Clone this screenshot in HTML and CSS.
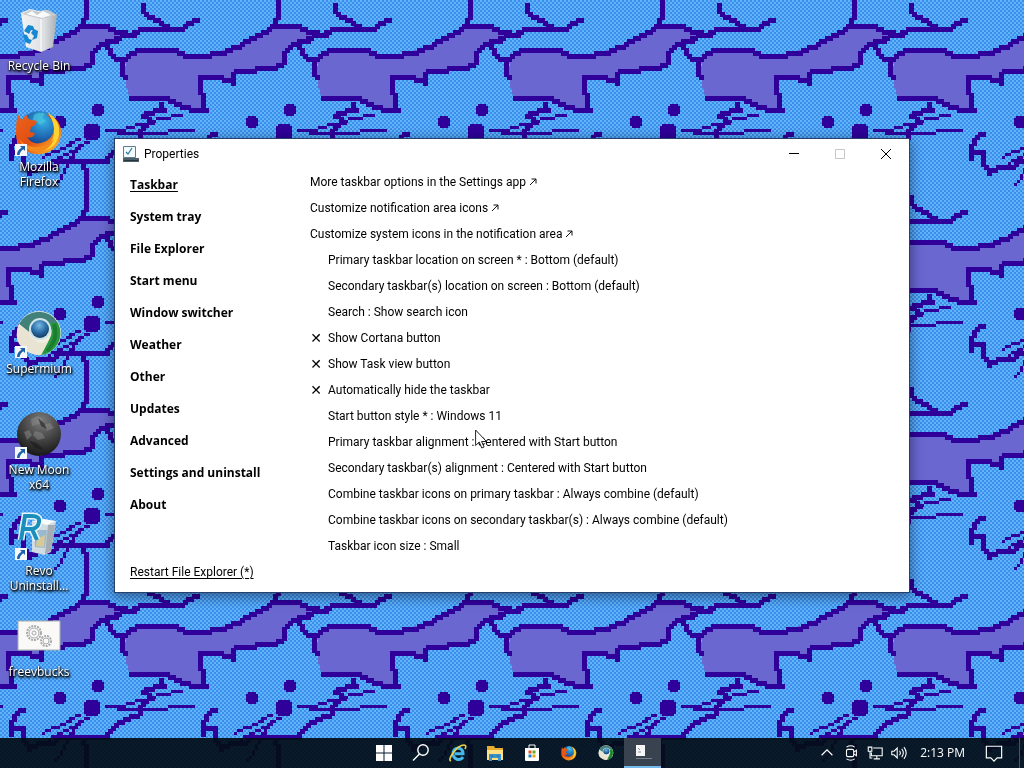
FILE: index.html
```html
<!DOCTYPE html>
<html lang="en">
<head>
<meta charset="utf-8">
<title>Properties</title>
<link rel="stylesheet" href="styles.css">
</head>
<body>
<canvas class="wallpaper" aria-hidden="true"></canvas>

<svg class="defs" aria-hidden="true">
  <defs>
    <linearGradient id="fxFire" x1="0" y1="0" x2="1" y2="1"><stop offset="0" stop-color="#e8641b"/><stop offset=".5" stop-color="#e34e12"/><stop offset="1" stop-color="#ffcb2e"/></linearGradient>
    <radialGradient id="fxGlobe" cx=".6" cy=".25" r=".8"><stop offset="0" stop-color="#35b4e8"/><stop offset=".6" stop-color="#1c5aa5"/><stop offset="1" stop-color="#122765"/></radialGradient>
    <radialGradient id="ball" cx=".45" cy=".3" r=".8"><stop offset="0" stop-color="#78b8e4"/><stop offset=".5" stop-color="#2a6da6"/><stop offset="1" stop-color="#0d2c4d"/></radialGradient>
    <radialGradient id="moon" cx=".55" cy=".2" r=".85"><stop offset="0" stop-color="#7b7b7b"/><stop offset=".5" stop-color="#454545"/><stop offset="1" stop-color="#111"/></radialGradient>
    <linearGradient id="bin" x1="0" x2="1"><stop offset="0" stop-color="#f3f4f4"/><stop offset=".65" stop-color="#dcdfe1"/><stop offset="1" stop-color="#a9aeb3"/></linearGradient>
  </defs>
  <symbol id="arrow" viewBox="0 0 12 12"><path d="M0 0h12v12H0z" fill="#f4f8fb"/><path d="M5 2h5v5L8.300 5.300C6.500 6.500 5 8 4.500 11H2C2 7.500 4 5 6.600 3.700z" fill="#1d5fa8"/></symbol>
  <symbol id="firefox" viewBox="0 0 48 48">
    <circle cx="24" cy="23" r="20" fill="url(#fxGlobe)"/>
    <path d="M19 7q6-4 11-1l-3 4 4 3-6 4-3-3-5 2z" fill="#4bc7dd" opacity=".65"/>
    <path d="M3 6q1 4 4 6 2-4 5-5 0 4 4 5 5 0 6 2-2 4-6 5l-1 5 5 1q-2 6-8 4 5 8 14 6 12-3 13-14 0-9-8-15 13 3 15 16 1 17-15 23-13 4-22-4Q0 36 1 23 1 13 3 6z" fill="url(#fxFire)"/>
    <path d="M33 5q13 7 11 22-3 14-17 16 10-6 12-17 1-12-6-21z" fill="#ffd331"/>
    <path d="M4 31q8 9 18 8 10 0 17-8-5 13-18 13Q9 43 4 31z" fill="#f58a1c"/>
  </symbol>
  <symbol id="supermium" viewBox="0 0 48 48">
    <circle cx="24" cy="23" r="22" fill="#f0eee0"/>
    <path d="M4 14A22 22 0 0 1 43 13H25q-9 0-11 9z" fill="#41817a"/>
    <path d="M43 13a22 22 0 0 1-17 32l9-17q4-8-2-15z" fill="#29983c"/>
    <path d="M39 14q5 15-7 27" fill="none" stroke="#1b7d32" stroke-width="4"/>
    <path d="M4 14q-7 18 7 26 7 5 15 5l8-15q-6 5-13 1-6-3-7-9z" fill="#e9e4d2"/>
    <circle cx="25" cy="19" r="11" fill="#cfe3e8"/><circle cx="25" cy="19" r="9" fill="url(#ball)"/>
  </symbol>
</svg>

<main class="desktop">
  <ul class="shortcuts">
    <li><a class="shortcut" href="#recycle">
      <svg class="pic" viewBox="0 0 48 48"><path d="M6 6l9-4 9 2 8-1 10 5-4 32-12 5-15-5z" fill="url(#bin)"/><path d="M7 7l19 5 16-4-9-5-9 2-9-2z" fill="#c5cacd"/><path d="M11 7l6-3 5 4 6-4 8 4-9 3z" fill="#fafafa"/><path d="M26 12v32" stroke="#fff" stroke-width="1"/><path d="M9 24l4-6 5 1 2 5-4-1-2 4zM19 22l4 2-1 7-5 2 2-4-3-3zM8 27l4 1 2 4 3 1-2 4-5-2z" fill="#1687d2"/></svg>
      <span>Recycle Bin</span></a></li>
    <li><a class="shortcut" href="#firefox">
      <svg class="pic" viewBox="0 0 48 48"><use href="#firefox"/><use href="#arrow" y="36" width="12" height="12"/></svg>
      <span>Mozilla Firefox</span></a></li>
    <li></li>
    <li><a class="shortcut" href="#supermium">
      <svg class="pic" viewBox="0 0 48 48"><use href="#supermium"/><use href="#arrow" y="36" width="12" height="12"/></svg>
      <span>Supermium</span></a></li>
    <li><a class="shortcut" href="#newmoon">
      <svg class="pic" viewBox="0 0 48 48"><circle cx="24" cy="23" r="22" fill="url(#moon)"/><path d="M16 8l7-3 5 3-4 5-7 2zM29 14l6-2 4 5-7 3zM20 20l7 2 3 5-7 2-5-5zM9 21l5-2 3 5-5 5z" fill="#929292" opacity=".45"/><path d="M23 7l6 5 3 6-6-3zM14 30l8 2 7 7-9-2z" fill="#181818" opacity=".55"/><use href="#arrow" y="36" width="12" height="12"/></svg>
      <span>New Moon x64</span></a></li>
    <li><a class="shortcut" href="#revo">
      <svg class="pic" viewBox="0 0 48 48"><path d="M17 9h24l-5 31-7 3-12-3z" fill="#d1dce2"/><path d="M17 9l12-2 12 2-9 4z" fill="#f9fbfc"/><path d="M33 13h7l-4 26-6 3z" fill="#a3adb3"/><path d="M19 18h13l-2 18-10-1z" fill="#7da6c3" opacity=".65"/><path d="M22 27l8-4-1 12-8-1z" fill="#d8ca96"/><path d="M6 28l4-24h7q8 0 7 6-1 6-7 7l5 11M9 17h8" fill="none" stroke="#e6f6fc" stroke-width="7"/><path d="M6 28l4-24h7q8 0 7 6-1 6-7 7l5 11M9 17h8" fill="none" stroke="#1c8ebb" stroke-width="4"/><use href="#arrow" y="36" width="12" height="12"/></svg>
      <span>Revo Uninstall...</span></a></li>
    <li><a class="shortcut" href="#freevbucks">
      <svg class="pic" viewBox="0 0 48 48"><path d="M3 8h42v29H3z" fill="#faf9f7" stroke="#a5adb0"/><g fill="none" stroke="#a8abad"><circle cx="19" cy="20" r="7" stroke-width="2" stroke-dasharray="2 1"/><circle cx="19" cy="20" r="5"/><circle cx="19" cy="20" r="2"/><circle cx="31" cy="28" r="5" stroke-width="2" stroke-dasharray="2 1"/><circle cx="31" cy="28" r="3"/></g></svg>
      <span>freevbucks</span></a></li>
  </ul>

  <section class="window" aria-label="Properties">
    <header class="titlebar">
      <svg class="app-icon" viewBox="0 0 16 16"><path d="M.5.500h12v11H.5z" fill="#f4fbfd" stroke="#5a7f92"/><path d="M3 6l2 2 4-6" fill="none" stroke="#247aa0" stroke-width="1.200"/><path d="M0 12h16v4H0z" fill="#4d5e68"/><path d="M1 14.500h14" stroke="#26343d"/></svg>
      <h1>Properties</h1>
      <button class="win-btn" aria-label="Minimize"><svg viewBox="0 0 12 12"><path d="M1 5.500h10" stroke="#000"/></svg></button>
      <button class="win-btn" aria-label="Maximize" disabled><svg viewBox="0 0 12 12"><path d="M1.500 1.500h9v9h-9z" fill="none" stroke="#c6c6c6"/></svg></button>
      <button class="win-btn" aria-label="Close"><svg viewBox="0 0 12 12"><path d="M1 1l10 10M11 1L1 11" fill="none" stroke="#000"/></svg></button>
    </header>
    <div class="panes">
      <nav class="sections">
        <a class="current" href="#taskbar">Taskbar</a>
        <a href="#tray">System tray</a>
        <a href="#explorer">File Explorer</a>
        <a href="#start">Start menu</a>
        <a href="#switcher">Window switcher</a>
        <a href="#weather">Weather</a>
        <a href="#other">Other</a>
        <a href="#updates">Updates</a>
        <a href="#advanced">Advanced</a>
        <a href="#settings">Settings and uninstall</a>
        <a href="#about">About</a>
        <a class="restart" href="#restart">Restart File Explorer (*)</a>
      </nav>
      <form class="options">
        <a class="row" href="#more">More taskbar options in the Settings app <svg class="out" viewBox="0 0 8 8"><path d="M1 7l6-6M2.500 1H7v4.500" fill="none" stroke="#111"/></svg></a>
        <a class="row" href="#notif">Customize notification area icons <svg class="out" viewBox="0 0 8 8"><path d="M1 7l6-6M2.500 1H7v4.500" fill="none" stroke="#111"/></svg></a>
        <a class="row" href="#sysicons">Customize system icons in the notification area <svg class="out" viewBox="0 0 8 8"><path d="M1 7l6-6M2.500 1H7v4.500" fill="none" stroke="#111"/></svg></a>
        <label class="row sub">Primary taskbar location on screen * : <select><option>Bottom (default)</option></select></label>
        <label class="row sub">Secondary taskbar(s) location on screen : <select><option>Bottom (default)</option></select></label>
        <label class="row sub">Search : <select><option>Show search icon</option></select></label>
        <label class="row"><input type="checkbox">Show Cortana button</label>
        <label class="row"><input type="checkbox">Show Task view button</label>
        <label class="row"><input type="checkbox">Automatically hide the taskbar</label>
        <label class="row sub">Start button style * : <select><option>Windows 11</option></select></label>
        <label class="row sub">Primary taskbar alignment : <select><option>Centered with Start button</option></select></label>
        <label class="row sub">Secondary taskbar(s) alignment : <select><option>Centered with Start button</option></select></label>
        <label class="row sub">Combine taskbar icons on primary taskbar : <select><option>Always combine (default)</option></select></label>
        <label class="row sub">Combine taskbar icons on secondary taskbar(s) : <select><option>Always combine (default)</option></select></label>
        <label class="row sub">Taskbar icon size : <select><option>Small</option></select></label>
      </form>
    </div>
  </section>
  <svg class="cursor" viewBox="0 0 12 20" aria-hidden="true"><path d="M.6 1v15.500l3.600-3.500 2.600 6 2.300-1-2.600-5.500h5z" fill="#fff" stroke="#222"/></svg>
</main>

<footer class="taskbar">
  <div class="apps">
    <button aria-label="Start"><svg viewBox="0 0 20 20"><path d="M2 2h7.500v7.500H2zM10.500 2H18v7.500h-7.500zM2 10.500h7.500V18H2zM10.500 10.500H18V18h-7.500z" fill="#fff"/></svg></button>
    <button aria-label="Search"><svg viewBox="0 0 20 20"><circle cx="12" cy="7" r="5.200" fill="none" stroke="#fff" stroke-width="1.400"/><path d="M8.500 11L2 17.500" stroke="#fff" stroke-width="1.500"/></svg></button>
    <button aria-label="Internet Explorer"><svg viewBox="0 0 20 20"><path d="M15 14q-2 3-5.500 2.500Q5 15 5 10.500 5.500 5.500 10 5q5 .500 5 5.800H7" fill="none" stroke="#43b9ec" stroke-width="3"/><path d="M3 18q-3-1 2-8 6-8 11-8 3 0 1 4" fill="none" stroke="#f0cf45" stroke-width="1.600"/></svg></button>
    <button aria-label="File Explorer"><svg viewBox="0 0 20 20"><path d="M2 3h7l1 2h8v12H2z" fill="#e9ad2d"/><path d="M2 7h16v10H2z" fill="#ffe082"/><path d="M4 11h12v7h-3v-3H7v3H4z" fill="#3993c8"/><path d="M6 13h2M12 13h2" stroke="#235e83"/></svg></button>
    <button aria-label="Store"><svg viewBox="0 0 20 20"><path d="M3 5h14v12q0 1-1 1H4q-1 0-1-1z" fill="#fff"/><path d="M7 5V2h6v3" fill="none" stroke="#fff"/><path d="M6.500 7.500h3v3h-3z" fill="#e25428"/><path d="M10.500 7.500h3v3h-3z" fill="#6ea723"/><path d="M6.500 11.500h3v3h-3z" fill="#1883c6"/><path d="M10.500 11.500h3v3h-3z" fill="#e2aa19"/></svg></button>
    <button aria-label="Firefox"><svg class="small" viewBox="0 0 48 48"><use href="#firefox"/></svg></button>
    <button aria-label="Supermium"><svg class="small" viewBox="0 0 48 48"><use href="#supermium"/></svg></button>
    <button class="active" aria-label="Properties"><svg viewBox="0 0 20 20"><path d="M3 3h9v11H3z" fill="#f6f6f6"/><path d="M5 6l2 2M5 10h3" stroke="#8292a0"/><path d="M3 16.500h16" stroke="#74818c"/></svg></button>
  </div>
  <div class="tray">
    <button aria-label="Show hidden icons"><svg viewBox="0 0 20 20"><path d="M4 12.500l6-6 6 6" fill="none" stroke="#fff" stroke-width="1.300"/></svg></button>
    <button aria-label="Meet now"><svg viewBox="0 0 20 20"><g fill="none" stroke="#fff" stroke-width="1.200"><rect x="5" y="6" width="8" height="8" rx="1.500"/><path d="M13 9l3-2v6l-3-2M5 3.500q5-3 9 0M5 16.500q5 3 9 0"/></g></svg></button>
    <button aria-label="Network"><svg viewBox="0 0 20 20"><g fill="none" stroke="#fff" stroke-width="1.200"><path d="M8 4.500h10v8.500H6V9.500M12 13v3.500M8.500 16.500h7M2.500 3.500h4v4.500h-4zM4.500 8v7.500H7"/></g></svg></button>
    <button aria-label="Volume"><svg viewBox="0 0 20 20"><g fill="none" stroke="#fff" stroke-width="1.200"><path d="M2 8h2.500L8 4.500v11L4.500 12H2zM10.500 7.500q2 2.500 0 5M13 5.500q3.600 4.500 0 9M15.500 3.500q5 6.500 0 13"/></g></svg></button>
    <time class="clock">2:13 PM</time>
    <button class="notify" aria-label="Notifications"><svg viewBox="0 0 20 20"><path d="M1.500 2.500h17v13h-5L10 19l-3.500-3.500h-5z" fill="none" stroke="#fff" stroke-width="1.300"/></svg></button>
    <button class="peek" aria-label="Show desktop"></button>
  </div>
</footer>
<script src="wallpaper.js"></script>
</body>
</html>
```
FILE: styles.css
```css
* { box-sizing: border-box; }
body {
  margin: 0;
  height: 100vh;
  display: flex;
  flex-direction: column;
  overflow: hidden;
  background: #499ff2;
  font: 12px/16px "Open Sans", "Noto Sans", sans-serif;
  color: #000;
}
a { color: inherit; text-decoration: none; }
button { border: 0; padding: 0; background: none; font: inherit; color: inherit; }
svg { display: block; }
.defs { position: absolute; width: 0; height: 0; }
.wallpaper { position: fixed; inset: 0; width: 100%; height: 100%; z-index: -1; }

.desktop { flex: 1; min-height: 0; position: relative; }
.shortcuts {
  list-style: none;
  margin: 0;
  padding: 7px 0 0 1px;
  width: 77px;
  display: grid;
  grid-auto-rows: 101px;
}
.shortcut {
  display: flex;
  flex-direction: column;
  align-items: center;
  gap: 3px;
  color: #fff;
  line-height: 15px;
  text-align: center;
  text-shadow: 1px 1px 2px #000, 0 1px 2px #000, 1px 2px 3px #000;
}
.shortcut span { max-width: 68px; }
.pic { width: 48px; height: 48px; }

.window {
  position: absolute;
  left: 115px;
  right: 115px;
  top: 139px;
  background: #fff;
  outline: 1px solid #26406b;
  box-shadow: 0 3px 12px 2px rgba(0, 0, 20, .45);
}
.titlebar { display: flex; align-items: center; height: 30px; padding-left: 8px; }
.app-icon { width: 16px; height: 16px; }
.titlebar h1 { flex: 1; margin: 0 0 0 5px; font: 12px/16px Roboto, sans-serif; }
.win-btn { width: 46px; height: 30px; display: grid; place-items: center; }
.win-btn svg { width: 12px; height: 12px; }

.panes { display: grid; grid-template-columns: 180px 1fr; padding: 0 15px 12px; }
.sections { display: flex; flex-direction: column; align-items: flex-start; font-weight: 700; }
.sections a { line-height: 32px; white-space: nowrap; }
.sections .current, .sections .restart { text-decoration: underline; text-underline-offset: 2px; }
.sections .restart { margin-top: auto; font: 12px/16px Roboto, sans-serif; }
.options {
  display: flex;
  flex-direction: column;
  align-items: flex-start;
  padding-bottom: 21px;
  font-family: Roboto, sans-serif;
}
.row { display: flex; align-items: center; height: 26px; white-space: pre; }
.sub { padding-left: 18px; }
.out { width: 8px; height: 8px; }
.row select {
  appearance: none;
  border: 0;
  margin: 0;
  padding: 0;
  background: none;
  font: inherit;
  color: inherit;
}
.row input { appearance: none; width: 18px; height: 16px; margin: 0; display: flex; align-items: center; }
.row input::before { content: "✕"; width: 12px; text-align: center; font: 700 14px/16px "DejaVu Sans", sans-serif; }
.row input:checked::before { content: "✓"; }
.cursor { position: absolute; left: 475px; top: 429px; width: 12px; height: 20px; }

.taskbar {
  height: 30px;
  display: grid;
  grid-template-columns: 1fr auto 1fr;
  background: rgba(3, 14, 24, .93);
  color: #fff;
}
.apps { grid-column: 2; display: flex; padding-left: 2px; }
.apps button { width: 37px; display: grid; place-items: center; }
.apps svg { width: 20px; height: 20px; }
.apps .small { width: 16px; height: 16px; }
.apps .active { background: #39434f; border-bottom: 2px solid #76b9ed; }
.tray { display: flex; align-items: center; justify-content: flex-end; }
.tray button { width: 24px; display: grid; place-items: center; }
.tray svg { width: 18px; height: 18px; }
.clock { padding: 0 9px; }
.tray .notify { width: 40px; }
.tray .peek { width: 10px; height: 30px; }
.tray .peek::before { content: ""; width: 1px; height: 30px; background: #4a545d; }
```
FILE: wallpaper.js
```javascript
// Pixel-art cat pattern: a 192px tile on a 2px grid.
const SIZE = 192, CELL = 2;
const INK = "#30009a", FUR = "#6a68d0", LIGHT = "#62b4fa", DARK = "#3b8ee9";

const tile = document.createElement("canvas");
tile.width = tile.height = SIZE;
const g = tile.getContext("2d");

for (let y = 0; y < SIZE; y += CELL)
  for (let x = 0; x < SIZE; x += CELL) {
    g.fillStyle = ((x + y) / CELL) % 2 ? DARK : LIGHT;
    g.fillRect(x, y, CELL, CELL);
  }

function block(x, y, w, h, color) {
  g.fillStyle = color;
  for (const dx of [-2 * SIZE, -SIZE, 0, SIZE])
    for (const dy of [-SIZE, 0, SIZE]) g.fillRect(x + dx, y + dy, w, h);
}

function line(points, step, size) {
  for (let i = 1; i < points.length; i++) {
    const [x0, y0] = points[i - 1], [x1, y1] = points[i];
    const n = Math.max(1, Math.ceil(Math.max(Math.abs(x1 - x0), Math.abs(y1 - y0)) / step));
    for (let k = 0; k <= n; k++) {
      const x = Math.round((x0 + (x1 - x0) * k / n - size / 2) / step) * step;
      const y = Math.round((y0 + (y1 - y0) * k / n - size / 2) / step) * step;
      block(x, y, size, size, INK);
    }
  }
}

const tail = [[82,25],[65,38],[51,43],[38,48],[25,53],[8,57],[-7,56],[-17,50],[-54,50],[-66,58],[-68,76],[-62,98],[-26,98],[-17,104],[-9,108],[12,110],[8,76],[33,80],[40,80],[45,71],[80,69],[91,63],[93,51],[105,44],[115,40],[125,35],[118,33],[105,25]];
for (let y = 0; y < 120; y += CELL)
  for (let x = -80; x < 130; x += CELL) {
    let inside = false;
    for (let i = 0, j = tail.length - 1; i < tail.length; j = i++) {
      const [ax, ay] = tail[i], [bx, by] = tail[j];
      if ((ay > y + 1) !== (by > y + 1) && x + 1 < (bx - ax) * (y + 1 - ay) / (by - ay) + ax) inside = !inside;
    }
    if (inside) block(x, y, CELL, CELL, FUR);
  }

const outlines = [
  [[80,160],[87,173],[87,192],[86,209],[82,217]],
  [[123,60],[136,51],[175,51],[184,56],[208,56],[225,52],[241,45],[261,35],[275,25],[297,25],[310,33],[325,35],[333,30],[370,30],[382,22],[388,20]],
  [[143,5],[145,13],[156,20],[166,27]],
  [[125,35],[115,40],[105,43],[94,51],[91,63],[80,69],[45,71],[40,77],[40,83],[33,79],[9,76],[8,88],[12,100],[13,110]],
  [[106,45],[111,54],[122,63],[124,76]],
  [[130,99],[166,99],[175,104],[184,108],[206,111]],
  [[23,133],[17,137],[12,145],[12,157]],
  [[12,152],[23,152],[25,166],[30,173],[40,167],[53,168],[60,160],[106,160],[117,149],[138,139],[142,127],[152,121],[144,115],[163,109],[160,104]]
];
for (const o of outlines) line(o, 3, 5);

const whiskers = [
  [[43,157],[58,150],[80,139]],
  [[50,163],[70,152],[88,141]],
  [[88,141],[72,156],[64,172],[56,183]],
  [[105,131],[122,130],[142,124]],
  [[117,132],[150,133],[167,133],[168,131],[192,131]],
  [[152,121],[165,118],[180,115]]
];
for (const w of whiskers) line(w, 3, 3);

// Eyes and nose: squares with the corners cut off.
for (const [x, y, r] of [[98,110,6],[60,122,6],[92,132,8]]) {
  block(x - r + 2, y - r, 2 * r - 4, 2 * r, INK);
  block(x - r, y - r + 2, 2 * r, 2 * r - 4, INK);
}

const wall = document.querySelector(".wallpaper");
function paint() {
  wall.width = innerWidth;
  wall.height = innerHeight;
  const c = wall.getContext("2d");
  c.fillStyle = c.createPattern(tile, "repeat");
  c.fillRect(0, 0, wall.width, wall.height);
}
addEventListener("resize", paint);
paint();
```
